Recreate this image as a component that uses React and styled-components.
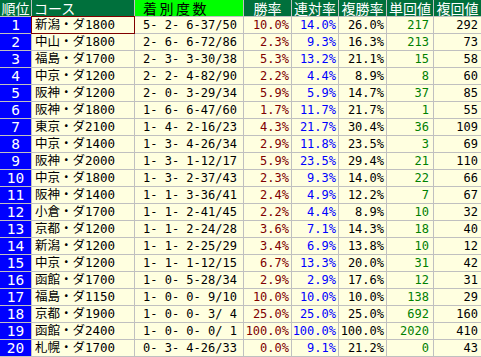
import React from 'react';
import styled, { createGlobalStyle } from 'styled-components';

const GlobalStyle = createGlobalStyle`
  html, body {
    margin: 0;
    padding: 0;
    background: #ffffff;
  }
`;

const Table = styled.div`
  display: grid;
  grid-template-columns: 31px 102px 108px 47px 46px 47px 46px 47px;
  grid-auto-rows: 16px;
  gap: 1px;
  width: 481px;
  padding-bottom: 1px;
  background-color: #c0c0c0;
  font-family: "DejaVu Sans Mono", "Noto Sans CJK JP", monospace;
`;

const HeadCell = styled.div`
  display: flex;
  align-items: center;
  justify-content: ${(p) => p.$align || 'center'};
  padding-left: ${(p) => p.$pad || 0}px;
  background-color: ${(p) => (p.$light ? '#00ff00' : '#00703c')};
  color: ${(p) => (p.$light ? '#000000' : '#ffffff')};
  font-family: "Noto Sans CJK JP", sans-serif;
  font-size: 14px;
  line-height: 14px;
  letter-spacing: ${(p) => p.$spacing || 0}px;
  white-space: nowrap;
`;

const RankCell = styled.div`
  display: flex;
  align-items: center;
  justify-content: center;
  background-color: #0000ff;
  color: #ffffff;
  font-size: 14.5px;
  line-height: 14px;
`;

const Cell = styled.div`
  display: flex;
  align-items: center;
  justify-content: ${(p) => p.$align || 'flex-end'};
  padding: 0 ${(p) => p.$pr ?? 3}px 0 ${(p) => p.$pl ?? 0}px;
  background-color: #ffffe0;
  color: ${(p) => p.$color || '#000000'};
  font-size: ${(p) => p.$size || 12}px;
  line-height: 14px;
  white-space: pre;
  outline: ${(p) => (p.$active ? '1px solid #800000' : 'none')};
`;

const rows = [
  ['新潟・ダ1800', '5- 2- 6-37/50', '10.0%', '14.0%', '26.0%', '217', '292'],
  ['中山・ダ1800', '2- 6- 6-72/86', '2.3%', '9.3%', '16.3%', '213', '73'],
  ['福島・ダ1700', '2- 3- 3-30/38', '5.3%', '13.2%', '21.1%', '15', '58'],
  ['中京・ダ1200', '2- 2- 4-82/90', '2.2%', '4.4%', '8.9%', '8', '60'],
  ['阪神・ダ1200', '2- 0- 3-29/34', '5.9%', '5.9%', '14.7%', '37', '85'],
  ['阪神・ダ1800', '1- 6- 6-47/60', '1.7%', '11.7%', '21.7%', '1', '55'],
  ['東京・ダ2100', '1- 4- 2-16/23', '4.3%', '21.7%', '30.4%', '36', '109'],
  ['中京・ダ1400', '1- 3- 4-26/34', '2.9%', '11.8%', '23.5%', '3', '69'],
  ['阪神・ダ2000', '1- 3- 1-12/17', '5.9%', '23.5%', '29.4%', '21', '110'],
  ['中京・ダ1800', '1- 3- 2-37/43', '2.3%', '9.3%', '14.0%', '22', '66'],
  ['阪神・ダ1400', '1- 1- 3-36/41', '2.4%', '4.9%', '12.2%', '7', '67'],
  ['小倉・ダ1700', '1- 1- 2-41/45', '2.2%', '4.4%', '8.9%', '10', '32'],
  ['京都・ダ1200', '1- 1- 2-24/28', '3.6%', '7.1%', '14.3%', '18', '40'],
  ['新潟・ダ1200', '1- 1- 2-25/29', '3.4%', '6.9%', '13.8%', '10', '12'],
  ['中京・ダ1200', '1- 1- 1-12/15', '6.7%', '13.3%', '20.0%', '31', '42'],
  ['函館・ダ1700', '1- 0- 5-28/34', '2.9%', '2.9%', '17.6%', '12', '31'],
  ['福島・ダ1150', '1- 0- 0- 9/10', '10.0%', '10.0%', '10.0%', '138', '29'],
  ['京都・ダ1900', '1- 0- 0- 3/ 4', '25.0%', '25.0%', '25.0%', '692', '160'],
  ['函館・ダ2400', '1- 0- 0- 0/ 1', '100.0%', '100.0%', '100.0%', '2020', '410'],
  ['札幌・ダ1700', '0- 3- 4-26/33', '0.0%', '9.1%', '21.2%', '0', '43'],
];

const App = () => (
  <>
    <GlobalStyle />
    <Table>
      <HeadCell>順位</HeadCell>
      <HeadCell $align="flex-start" $pad={2}>コース</HeadCell>
      <HeadCell $light $align="flex-start" $pad={8} $spacing={2.5}>着別度数</HeadCell>
      <HeadCell>勝率</HeadCell>
      <HeadCell>連対率</HeadCell>
      <HeadCell>複勝率</HeadCell>
      <HeadCell>単回値</HeadCell>
      <HeadCell>複回値</HeadCell>
      {rows.map((r, i) => (
        <React.Fragment key={i}>
          <RankCell>{i + 1}</RankCell>
          <Cell $align="flex-start" $pl={3} $size={12.5} $active={i === 0}>{r[0]}</Cell>
          <Cell $align="flex-start" $pl={8}>{r[1]}</Cell>
          <Cell $color="#800000" $pr={2}>{r[2]}</Cell>
          <Cell $color="#0000ff" $pr={2}>{r[3]}</Cell>
          <Cell $pr={2}>{r[4]}</Cell>
          <Cell $color="#008000" $pr={4}>{r[5]}</Cell>
          <Cell>{r[6]}</Cell>
        </React.Fragment>
      ))}
    </Table>
  </>
);

export default App;
